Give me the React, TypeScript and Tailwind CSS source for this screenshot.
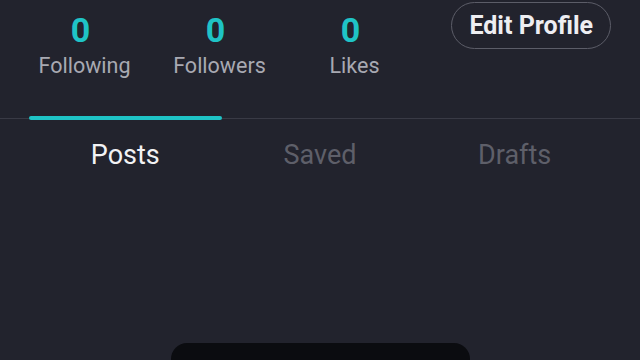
import React, { useState } from "react";

const stats = [
  { value: 0, label: "Following" },
  { value: 0, label: "Followers" },
  { value: 0, label: "Likes" },
];

const tabs = ["Posts", "Saved", "Drafts"];

export default function App() {
  const [active, setActive] = useState(0);

  return (
    <div
      className="w-[640px] h-[360px] overflow-hidden bg-[#22232d] flex flex-col"
      style={{ fontFamily: "Roboto, 'Liberation Sans', sans-serif" }}
    >
      {/* header stats */}
      <div className="h-[118px] flex items-start pl-[17px] pr-[29px]">
        <div className="flex">
          {stats.map((s) => (
            <div key={s.label} className="w-[135px] flex flex-col items-center pt-[11px]">
              <span className="text-[34px] leading-[38px] font-bold text-[#1fc3c6] -ml-[8px]">
                {s.value}
              </span>
              <span className="text-[21.5px] leading-[26px] text-[#a8a9b2] mt-[4px]">{s.label}</span>
            </div>
          ))}
        </div>
        <button className="ml-auto mt-[2px] h-[47px] px-[17px] rounded-full border-[1.5px] border-[#5c5d68] text-[25px] font-bold text-[#eeeef2]">
          Edit Profile
        </button>
      </div>

      {/* tabs */}
      <div className="relative border-t border-[#393a45]">
        <div className="flex px-[28px]">
          {tabs.map((t, i) => (
            <button
              key={t}
              onClick={() => setActive(i)}
              className={
                "relative w-[195px] h-[72px] flex items-center justify-center text-[27px] " +
                (i === active ? "text-[#f2f2f4]" : "text-[#5e5f69]")
              }
            >
              {i === active && (
                <span className="absolute left-[1px] right-[1px] top-[-3px] h-[4px] rounded-full bg-[#1fc3c6]" />
              )}
              {t}
            </button>
          ))}
        </div>
      </div>

      <div className="flex-1 flex flex-col justify-end items-center">
        <div className="w-[299px] h-[17px] rounded-t-[16px] bg-[#0b0c10]" />
      </div>
    </div>
  );
}
